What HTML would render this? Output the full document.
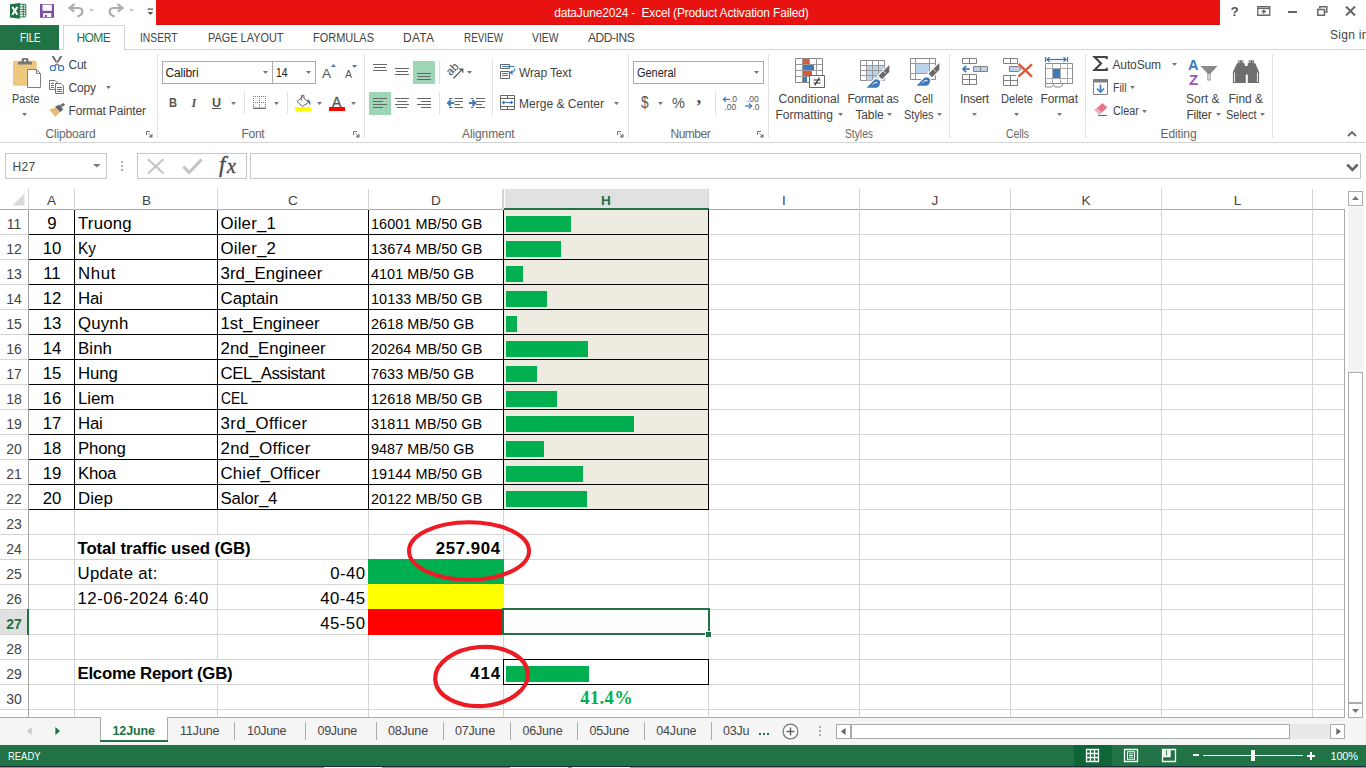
<!DOCTYPE html>
<html lang="en"><head><meta charset="utf-8"><title>dataJune2024 - Excel</title>
<style>
html,body{margin:0;padding:0}
body{width:1366px;height:768px;position:relative;overflow:hidden;background:#fff;font-family:'Liberation Sans',sans-serif}
.r{position:absolute;display:block}
.t{position:absolute;white-space:nowrap;line-height:1}
</style></head>
<body>
<div class="r" style="left:156px;top:0px;width:1064px;height:25px;background:#E81210;"></div>
<div class="r" style="left:156px;top:24px;width:1064px;height:1px;background:#D40F0D;"></div>
<span id="t0" class="t" style="top:7.01px;font-size:12px;color:#fff;font-family:'Liberation Sans',sans-serif;letter-spacing:-0.174px;left:554.2px;white-space:pre;">dataJune2024 -  Excel (Product Activation Failed)</span>
<svg class="r" style="left:10px;top:3px" width="17" height="16" viewBox="0 0 17 16"><rect x="9" y="1.3" width="6.8" height="12.6" rx="0.8" fill="#fff" stroke="#217346" stroke-width="1"/>
<path d="M10 3.9H15.4M10 6.3H15.4M10 8.7H15.4M10 11.1H15.4" stroke="#217346" stroke-width="0.9"/><path d="M13.3 1.6V13.6" stroke="#217346" stroke-width="0.9"/>
<path d="M0 1.3L9.9 0V15.8L0 14.4Z" fill="#217346"/>
<path d="M2.3 3.9L7.4 11.7M7.4 3.9L2.3 11.7" stroke="#fff" stroke-width="2"/></svg>
<svg class="r" style="left:40px;top:4px" width="14" height="14" viewBox="0 0 14 14"><path d="M0 0H14V13.8H0Z" fill="#7F4FA3"/><path d="M2.5 0.7H11.8V6.8H2.5Z" fill="#fff"/><path d="M3 9.2H11.3V13H3Z" fill="#fff"/><path d="M4.8 10.9H6.9V13H4.8Z" fill="#7F4FA3"/></svg>
<svg class="r" style="left:68px;top:3px" width="17" height="15" viewBox="0 0 17 15"><path d="M1.2 5H10.4C15.6 5 16.2 11.6 9.3 13.5" fill="none" stroke="#ADADAD" stroke-width="2.2"/><path d="M6.4 1.2L1.6 5L6.2 8.7" fill="none" stroke="#ADADAD" stroke-width="2.3"/></svg>
<svg class="r" style="left:89px;top:9px" width="5" height="3" viewBox="0 0 5 3"><path d="M0 0H5L2.5 3Z" fill="#C4C4C4"/></svg>
<svg class="r" style="left:108px;top:3px" width="17" height="15" viewBox="0 0 17 15"><path d="M14.8 5H5.6C0.4 5 -0.2 11.6 6.7 13.5" fill="none" stroke="#ADADAD" stroke-width="2.2"/><path d="M9.6 1.2L14.4 5L9.8 8.7" fill="none" stroke="#ADADAD" stroke-width="2.3"/></svg>
<svg class="r" style="left:129px;top:9px" width="5" height="3" viewBox="0 0 5 3"><path d="M0 0H5L2.5 3Z" fill="#C4C4C4"/></svg>
<svg class="r" style="left:147px;top:8px" width="7" height="8" viewBox="0 0 7 8"><path d="M0.8 1.1H6.1" stroke="#555" stroke-width="1.3"/><path d="M0.6 4H6.3L3.45 7Z" fill="#555"/></svg>
<span id="t1" class="t" style="top:5.01px;font-size:13.5px;color:#555;font-family:'Liberation Sans',sans-serif;font-weight:700;left:1230.5px;">?</span>
<svg class="r" style="left:1257px;top:6px" width="14" height="10" viewBox="0 0 14 10"><path d="M0.75 0.75H12.75V9.25H0.75Z" fill="none" stroke="#666" stroke-width="1.3"/><path d="M0.75 2.5H12.75" stroke="#666" stroke-width="1.2"/><path d="M6.75 8V4.4M4.6 6.4L6.75 4.2L8.9 6.4" fill="none" stroke="#666" stroke-width="1.2"/></svg>
<div class="r" style="left:1288px;top:11px;width:9px;height:2px;background:#666;"></div>
<svg class="r" style="left:1317px;top:6px" width="11" height="10" viewBox="0 0 11 10"><path d="M2.8 2.4V0.8H9.8V6H8" fill="none" stroke="#666" stroke-width="1.5"/><path d="M0.8 3.6H7.4V9.2H0.8Z" fill="none" stroke="#666" stroke-width="1.5"/></svg>
<svg class="r" style="left:1345px;top:6px" width="11" height="10" viewBox="0 0 11 10"><path d="M1 0.6L10 9.4M10 0.6L1 9.4" stroke="#666" stroke-width="2.1"/></svg>
<div class="r" style="left:0px;top:25px;width:59px;height:25px;background:#217346;"></div>
<span id="t2" class="t" style="top:32.01px;font-size:12px;color:#fff;font-family:'Liberation Sans',sans-serif;transform:scaleX(0.8089);transform-origin:0 50%;left:19.5px;">FILE</span>
<div class="r" style="left:63px;top:25px;width:62px;height:25px;background:#fff;border:1px solid #D4D4D4;border-bottom:none;box-sizing:border-box;"></div>
<div class="r" style="left:59px;top:49px;width:4px;height:1px;background:#D4D4D4;"></div>
<div class="r" style="left:125px;top:49px;width:1241px;height:1px;background:#D4D4D4;"></div>
<span id="t3" class="t" style="top:32.01px;font-size:12px;color:#217346;font-family:'Liberation Sans',sans-serif;letter-spacing:-0.572px;left:76.5px;">HOME</span>
<span id="t4" class="t" style="top:32.01px;font-size:12px;color:#444;font-family:'Liberation Sans',sans-serif;transform:scaleX(0.8562);transform-origin:0 50%;left:139.5px;">INSERT</span>
<span id="t5" class="t" style="top:32.01px;font-size:12px;color:#444;font-family:'Liberation Sans',sans-serif;transform:scaleX(0.9105);transform-origin:0 50%;left:207.5px;">PAGE LAYOUT</span>
<span id="t6" class="t" style="top:32.01px;font-size:12px;color:#444;font-family:'Liberation Sans',sans-serif;transform:scaleX(0.9147);transform-origin:0 50%;left:313px;">FORMULAS</span>
<span id="t7" class="t" style="top:32.01px;font-size:12px;color:#444;font-family:'Liberation Sans',sans-serif;letter-spacing:0.219px;left:403px;">DATA</span>
<span id="t8" class="t" style="top:32.01px;font-size:12px;color:#444;font-family:'Liberation Sans',sans-serif;transform:scaleX(0.8238);transform-origin:0 50%;left:463.5px;">REVIEW</span>
<span id="t9" class="t" style="top:32.01px;font-size:12px;color:#444;font-family:'Liberation Sans',sans-serif;transform:scaleX(0.8640);transform-origin:0 50%;left:532px;">VIEW</span>
<span id="t10" class="t" style="top:32.01px;font-size:12px;color:#444;font-family:'Liberation Sans',sans-serif;letter-spacing:-0.438px;left:588px;">ADD-INS</span>
<span id="t11" class="t" style="top:29.01px;font-size:12px;color:#444;font-family:'Liberation Sans',sans-serif;letter-spacing:0.278px;left:1330px;">Sign in</span>
<div class="r" style="left:0px;top:142px;width:1366px;height:1px;background:#D4D4D4;"></div>
<div class="r" style="left:157px;top:54px;width:1px;height:84px;background:#E1E1E1;"></div>
<div class="r" style="left:364px;top:54px;width:1px;height:84px;background:#E1E1E1;"></div>
<div class="r" style="left:628px;top:54px;width:1px;height:84px;background:#E1E1E1;"></div>
<div class="r" style="left:768px;top:54px;width:1px;height:84px;background:#E1E1E1;"></div>
<div class="r" style="left:949px;top:54px;width:1px;height:84px;background:#E1E1E1;"></div>
<div class="r" style="left:1085px;top:54px;width:1px;height:84px;background:#E1E1E1;"></div>
<div class="r" style="left:1272px;top:54px;width:1px;height:84px;background:#E1E1E1;"></div>
<span id="t12" class="t" style="top:128.01px;font-size:12px;color:#666;font-family:'Liberation Sans',sans-serif;letter-spacing:-0.160px;left:45.5px;">Clipboard</span>
<span id="t13" class="t" style="top:128.01px;font-size:12px;color:#666;font-family:'Liberation Sans',sans-serif;letter-spacing:-0.291px;left:241.5px;">Font</span>
<span id="t14" class="t" style="top:128.01px;font-size:12px;color:#666;font-family:'Liberation Sans',sans-serif;letter-spacing:-0.102px;left:462px;">Alignment</span>
<span id="t15" class="t" style="top:128.01px;font-size:12px;color:#666;font-family:'Liberation Sans',sans-serif;letter-spacing:-0.488px;left:670.5px;">Number</span>
<span id="t16" class="t" style="top:128.01px;font-size:12px;color:#666;font-family:'Liberation Sans',sans-serif;transform:scaleX(0.8566);transform-origin:0 50%;left:844.5px;">Styles</span>
<span id="t17" class="t" style="top:128.01px;font-size:12px;color:#666;font-family:'Liberation Sans',sans-serif;transform:scaleX(0.8623);transform-origin:0 50%;left:1005.5px;">Cells</span>
<span id="t18" class="t" style="top:128.01px;font-size:12px;color:#666;font-family:'Liberation Sans',sans-serif;letter-spacing:-0.107px;left:1160.5px;">Editing</span>
<svg class="r" style="left:146px;top:131px" width="7" height="7" viewBox="0 0 7 7"><path d="M0.5 4V0.5H4" fill="none" stroke="#777"/><path d="M6.5 2.5V6.5H2.5Z" fill="#777"/><path d="M2.5 2.5L6 6" stroke="#777"/></svg>
<svg class="r" style="left:353px;top:131px" width="7" height="7" viewBox="0 0 7 7"><path d="M0.5 4V0.5H4" fill="none" stroke="#777"/><path d="M6.5 2.5V6.5H2.5Z" fill="#777"/><path d="M2.5 2.5L6 6" stroke="#777"/></svg>
<svg class="r" style="left:617px;top:131px" width="7" height="7" viewBox="0 0 7 7"><path d="M0.5 4V0.5H4" fill="none" stroke="#777"/><path d="M6.5 2.5V6.5H2.5Z" fill="#777"/><path d="M2.5 2.5L6 6" stroke="#777"/></svg>
<svg class="r" style="left:757px;top:131px" width="7" height="7" viewBox="0 0 7 7"><path d="M0.5 4V0.5H4" fill="none" stroke="#777"/><path d="M6.5 2.5V6.5H2.5Z" fill="#777"/><path d="M2.5 2.5L6 6" stroke="#777"/></svg>
<svg class="r" style="left:1347px;top:130px" width="10" height="7" viewBox="0 0 10 7"><path d="M1 6L5 2L9 6" fill="none" stroke="#666" stroke-width="1.8"/></svg>
<svg class="r" style="left:12px;top:57px" width="30" height="32" viewBox="0 0 30 32"><rect x="1" y="3.8" width="23.8" height="25" rx="1.6" fill="#EDC87E"/>
<path d="M6 7.6V5.6Q6 4.4 7.2 4.4H18.8Q20 4.4 20 5.6V7.6Z" fill="#777"/><path d="M9.6 5V2.4Q9.6 1 11 1H15Q16.4 1 16.4 2.4V5Z" fill="#777"/><path d="M12 2.8H14V4.6H12Z" fill="#fff"/>
<path d="M15.5 12.5H24.5L28.5 16.5V30.5H15.5Z" fill="#fff" stroke="#808080"/><path d="M24.5 12.5V16.5H28.5" fill="none" stroke="#808080"/></svg>
<span id="t19" class="t" style="top:93.01px;font-size:12px;color:#444;font-family:'Liberation Sans',sans-serif;transform:scaleX(0.8961);transform-origin:0 50%;left:11.5px;">Paste</span>
<svg class="r" style="left:22px;top:113px" width="5" height="3" viewBox="0 0 5 3"><path d="M0 0H5L2.5 3Z" fill="#777"/></svg>
<svg class="r" style="left:49px;top:55px" width="16" height="16" viewBox="0 0 16 16"><path d="M2.6 1.2L4.8 1L10.6 11L9.4 11.6ZM13.4 1.2L11.2 1L5.4 11L6.6 11.6Z" fill="#666"/>
<circle cx="3.9" cy="13.2" r="2.6" fill="#fff" stroke="#3E79B9" stroke-width="1.2"/><circle cx="12.1" cy="13.2" r="2.6" fill="#fff" stroke="#3E79B9" stroke-width="1.2"/></svg>
<span id="t20" class="t" style="top:59.01px;font-size:12px;color:#444;font-family:'Liberation Sans',sans-serif;letter-spacing:-0.274px;left:68.5px;">Cut</span>
<svg class="r" style="left:49px;top:79px" width="16" height="15" viewBox="0 0 16 15"><path d="M0.5 1.5H6L8.5 4V10.5H0.5Z" fill="#fff" stroke="#777"/><path d="M2 4.5H5M2 6.5H5M2 8.5H5" stroke="#3E79B9"/>
<path d="M6.5 4.5H12L14.5 7V14.5H6.5Z" fill="#fff" stroke="#777"/><path d="M8 8.5H13M8 10.5H13M8 12.5H13" stroke="#3E79B9"/></svg>
<span id="t21" class="t" style="top:82.01px;font-size:12px;color:#444;font-family:'Liberation Sans',sans-serif;letter-spacing:-0.150px;left:68.5px;">Copy</span>
<svg class="r" style="left:106px;top:86px" width="5" height="3" viewBox="0 0 5 3"><path d="M0 0H5L2.5 3Z" fill="#777"/></svg>
<svg class="r" style="left:49px;top:102px" width="17" height="16" viewBox="0 0 17 16"><path d="M0.3 7.6L6.6 5.4L10.6 10.6L6.3 14.8Z" fill="#E8B96A"/><path d="M6 4.7L10.6 2.4L14.3 7.4L11 10.2Z" fill="#666"/><path d="M11 2.9L14.7 1L15.9 2.9L12.9 5.1Z" fill="#666"/></svg>
<span id="t22" class="t" style="top:105.01px;font-size:12px;color:#444;font-family:'Liberation Sans',sans-serif;letter-spacing:-0.138px;left:68.5px;">Format Painter</span>
<div class="r" style="left:162px;top:61px;width:111px;height:23px;background:#fff;border:1px solid #ABABAB;box-sizing:border-box;"></div>
<div class="r" style="left:272px;top:61px;width:44px;height:23px;background:#fff;border:1px solid #ABABAB;box-sizing:border-box;"></div>
<span id="t23" class="t" style="top:67.01px;font-size:12px;color:#222;font-family:'Liberation Sans',sans-serif;letter-spacing:-0.156px;left:165.5px;">Calibri</span>
<span id="t24" class="t" style="top:67.01px;font-size:12px;color:#222;font-family:'Liberation Sans',sans-serif;transform:scaleX(0.8608);transform-origin:0 50%;left:276px;">14</span>
<svg class="r" style="left:263px;top:71px" width="5" height="3" viewBox="0 0 5 3"><path d="M0 0H5L2.5 3Z" fill="#777"/></svg>
<svg class="r" style="left:305.5px;top:71px" width="5" height="3" viewBox="0 0 5 3"><path d="M0 0H5L2.5 3Z" fill="#777"/></svg>
<span id="t25" class="t" style="top:67.01px;font-size:13.5px;color:#555;font-family:'Liberation Sans',sans-serif;letter-spacing:0.984px;left:322px;">A</span>
<svg class="r" style="left:331px;top:64px" width="5" height="3" viewBox="0 0 5 3"><path d="M0 3H5L2.5 0Z" fill="#3E79B9"/></svg>
<span id="t26" class="t" style="top:69.00px;font-size:10.5px;color:#555;font-family:'Liberation Sans',sans-serif;letter-spacing:0.484px;left:345px;">A</span>
<svg class="r" style="left:352px;top:64.5px" width="5" height="3" viewBox="0 0 5 3"><path d="M0 0H5L2.5 3Z" fill="#3E79B9"/></svg>
<span id="t27" class="t" style="top:97.01px;font-size:12.5px;color:#555;font-family:'Liberation Sans',sans-serif;font-weight:700;transform:scaleX(0.8858);transform-origin:0 50%;left:168.5px;">B</span>
<span id="t28" class="t" style="top:97.01px;font-size:12.5px;color:#555;font-family:'Liberation Serif',serif;font-weight:700;font-style:italic;left:191.5px;">I</span>
<span id="t29" class="t" style="top:97.01px;font-size:12.5px;color:#555;font-family:'Liberation Sans',sans-serif;font-weight:700;letter-spacing:-0.031px;left:212px;">U</span>
<div class="r" style="left:212px;top:108px;width:9px;height:1px;background:#555;"></div>
<svg class="r" style="left:231px;top:102px" width="5" height="3" viewBox="0 0 5 3"><path d="M0 0H5L2.5 3Z" fill="#777"/></svg>
<div class="r" style="left:244px;top:92px;width:1px;height:22px;background:#E1E1E1;"></div>
<div class="r" style="left:287px;top:92px;width:1px;height:22px;background:#E1E1E1;"></div>
<svg class="r" style="left:253px;top:96px" width="13" height="13" viewBox="0 0 13 13"><path d="M0 0.5H13M0 6.5H13M0.5 0V11.5M6.5 0V11.5M12.5 0V11.5" stroke="#7A7A7A" stroke-dasharray="1 1" fill="none" shape-rendering="crispEdges"/><path d="M0 12.3H13" stroke="#666" stroke-width="1.3"/></svg>
<svg class="r" style="left:273.5px;top:102px" width="5" height="3" viewBox="0 0 5 3"><path d="M0 0H5L2.5 3Z" fill="#777"/></svg>
<svg class="r" style="left:294px;top:93px" width="18" height="19" viewBox="0 0 18 19"><path d="M1 14H17V18H1Z" fill="#FFFF00"/><path d="M8.6 3.6L14.4 9.6L8.6 13.4L3 8.6Z" fill="#fff" stroke="#666" stroke-width="1"/><path d="M7.4 7.5V2.4H10V5" fill="none" stroke="#666" stroke-width="1"/><path d="M13.6 6.2C17 7.4 17 11 15.8 12.8C15.4 10.6 14.8 9.6 13.2 8.6Z" fill="#3E79B9"/></svg>
<svg class="r" style="left:316.5px;top:102px" width="5" height="3" viewBox="0 0 5 3"><path d="M0 0H5L2.5 3Z" fill="#777"/></svg>
<span id="t30" class="t" style="top:95.01px;font-size:14px;color:#555;font-family:'Liberation Sans',sans-serif;letter-spacing:1.656px;left:332px;-webkit-text-stroke:0.3px #555;">A</span>
<div class="r" style="left:329px;top:107px;width:16px;height:4px;background:#F00;"></div>
<svg class="r" style="left:350.5px;top:102px" width="5" height="3" viewBox="0 0 5 3"><path d="M0 0H5L2.5 3Z" fill="#777"/></svg>
<div class="r" style="left:373px;top:64px;width:14px;height:1px;background:#666;"></div>
<div class="r" style="left:374px;top:67px;width:12px;height:1px;background:#666;"></div>
<div class="r" style="left:373px;top:70px;width:14px;height:1px;background:#666;"></div>
<div class="r" style="left:395px;top:68px;width:14px;height:1px;background:#666;"></div>
<div class="r" style="left:396px;top:71px;width:12px;height:1px;background:#666;"></div>
<div class="r" style="left:395px;top:74px;width:14px;height:1px;background:#666;"></div>
<div class="r" style="left:413px;top:61px;width:22px;height:23px;background:#9FD5B7;"></div>
<div class="r" style="left:417px;top:73px;width:14px;height:1px;background:#666;"></div>
<div class="r" style="left:418px;top:76px;width:12px;height:1px;background:#666;"></div>
<div class="r" style="left:417px;top:79px;width:14px;height:1px;background:#666;"></div>
<div class="r" style="left:439px;top:61px;width:1px;height:23px;background:#E1E1E1;"></div>
<div class="r" style="left:369px;top:92px;width:22px;height:23px;background:#9FD5B7;"></div>
<div class="r" style="left:373px;top:98px;width:14px;height:1px;background:#666;"></div>
<div class="r" style="left:373px;top:101px;width:10px;height:1px;background:#666;"></div>
<div class="r" style="left:373px;top:104px;width:14px;height:1px;background:#666;"></div>
<div class="r" style="left:373px;top:107px;width:10px;height:1px;background:#666;"></div>
<div class="r" style="left:395px;top:98px;width:14px;height:1px;background:#666;"></div>
<div class="r" style="left:397px;top:101px;width:10px;height:1px;background:#666;"></div>
<div class="r" style="left:395px;top:104px;width:14px;height:1px;background:#666;"></div>
<div class="r" style="left:397px;top:107px;width:10px;height:1px;background:#666;"></div>
<div class="r" style="left:417px;top:98px;width:14px;height:1px;background:#666;"></div>
<div class="r" style="left:421px;top:101px;width:10px;height:1px;background:#666;"></div>
<div class="r" style="left:417px;top:104px;width:14px;height:1px;background:#666;"></div>
<div class="r" style="left:421px;top:107px;width:10px;height:1px;background:#666;"></div>
<div class="r" style="left:439px;top:92px;width:1px;height:23px;background:#E1E1E1;"></div>
<svg class="r" style="left:446px;top:63px" width="18" height="17" viewBox="0 0 18 17"><path d="M7.4 15.4L16.4 6.4" stroke="#444" stroke-width="1.1"/><path d="M13.2 6.1H16.8V9.7" fill="none" stroke="#444" stroke-width="1.1"/>
<text x="0" y="0" font-family="Liberation Sans,sans-serif" font-size="11.5" fill="#444" transform="translate(4.6,13.2) rotate(-45)">ab</text></svg>
<svg class="r" style="left:467px;top:71px" width="5" height="3" viewBox="0 0 5 3"><path d="M0 0H5L2.5 3Z" fill="#777"/></svg>
<div class="r" style="left:492px;top:60px;width:1px;height:55px;background:#E1E1E1;"></div>
<svg class="r" style="left:447px;top:97px" width="17" height="12" viewBox="0 0 17 12"><path d="M2 1.5H5.5M7.5 1.5H16M7.5 4.5H16M7.5 7.5H13M2 10.5H5.5M7.5 10.5H16" stroke="#666"/><path d="M0.8 6H7.2" stroke="#3E79B9" stroke-width="1.9"/><path d="M3.8 3L0.8 6L3.8 9" fill="none" stroke="#3E79B9" stroke-width="1.9"/></svg>
<svg class="r" style="left:469px;top:97px" width="17" height="12" viewBox="0 0 17 12"><path d="M2 1.5H4.5M7 1.5H16M7 4.5H16M7 7.5H13M2 10.5H4.5M7 10.5H16" stroke="#666"/><path d="M0 6H6.4" stroke="#3E79B9" stroke-width="1.9"/><path d="M3.4 3L6.4 6L3.4 9" fill="none" stroke="#3E79B9" stroke-width="1.9"/></svg>
<svg class="r" style="left:499px;top:63px" width="18" height="17" viewBox="0 0 18 17"><path d="M1.5 1.5H10.5V5.5H1.5Z" fill="#fff" stroke="#666"/><path d="M1.5 8.5H10.5V15.5H1.5Z" fill="#fff" stroke="#666"/><path d="M3 3.5H15.5" stroke="#3E79B9" stroke-width="1.1"/><path d="M3 10.5H9M3 12.5H9" stroke="#3E79B9" stroke-width="1.1"/>
<path d="M15.6 5.4C16.2 8.6 14.4 9.6 11.6 9.6" fill="none" stroke="#3E79B9" stroke-width="1.1"/><path d="M13.6 7.5L11.4 9.6L13.6 11.7" fill="none" stroke="#3E79B9" stroke-width="1.1"/></svg>
<span id="t31" class="t" style="top:67.01px;font-size:12px;color:#444;font-family:'Liberation Sans',sans-serif;letter-spacing:-0.127px;left:519px;">Wrap Text</span>
<svg class="r" style="left:499px;top:94px" width="17" height="17" viewBox="0 0 17 17"><path d="M1.5 1.5H15.5V15.5H1.5Z" fill="#fff" stroke="#666"/><path d="M1.5 4.5H15.5M1.5 12.5H15.5M8.5 1.5V4.5M8.5 12.5V15.5" stroke="#666"/>
<path d="M3.6 8.5H13.4" stroke="#3E79B9" stroke-width="1.1"/><path d="M5.4 6.8L3.4 8.5L5.4 10.2M11.6 6.8L13.6 8.5L11.6 10.2" fill="none" stroke="#3E79B9" stroke-width="1.1"/></svg>
<span id="t32" class="t" style="top:98.01px;font-size:12px;color:#444;font-family:'Liberation Sans',sans-serif;letter-spacing:0.022px;left:519px;">Merge &amp; Center</span>
<svg class="r" style="left:613.5px;top:102px" width="5" height="3" viewBox="0 0 5 3"><path d="M0 0H5L2.5 3Z" fill="#777"/></svg>
<div class="r" style="left:633px;top:61px;width:131px;height:23px;background:#fff;border:1px solid #ABABAB;box-sizing:border-box;"></div>
<span id="t33" class="t" style="top:67.01px;font-size:12px;color:#222;font-family:'Liberation Sans',sans-serif;transform:scaleX(0.9133);transform-origin:0 50%;left:636.5px;">General</span>
<svg class="r" style="left:753.5px;top:71px" width="5" height="3" viewBox="0 0 5 3"><path d="M0 0H5L2.5 3Z" fill="#777"/></svg>
<span id="t34" class="t" style="top:93.50px;font-size:17px;color:#555;font-family:'Liberation Sans',sans-serif;transform:scaleX(0.8026);transform-origin:0 50%;left:640.8px;">$</span>
<svg class="r" style="left:657.5px;top:102px" width="5" height="3" viewBox="0 0 5 3"><path d="M0 0H5L2.5 3Z" fill="#777"/></svg>
<span id="t35" class="t" style="top:96.01px;font-size:14.5px;color:#555;font-family:'Liberation Sans',sans-serif;letter-spacing:0.094px;left:672px;">%</span>
<span id="t36" class="t" style="top:87.01px;font-size:19px;color:#555;font-family:'Liberation Serif',serif;font-weight:700;left:696.5px;">,</span>
<div class="r" style="left:715px;top:92px;width:1px;height:23px;background:#E1E1E1;"></div>
<svg class="r" style="left:722px;top:95px" width="16" height="15" viewBox="0 0 16 15"><path d="M1.4 4.4H7.8" stroke="#3E79B9" stroke-width="1.3"/><path d="M4 1.9L1.4 4.4L4 6.9" fill="none" stroke="#3E79B9" stroke-width="1.3"/>
<text x="8" y="6.5" font-family="Liberation Sans,sans-serif" font-size="8.5" fill="#555">.0</text><text x="2.5" y="14.5" font-family="Liberation Sans,sans-serif" font-size="8.5" fill="#555">.00</text></svg>
<svg class="r" style="left:744px;top:95px" width="16" height="15" viewBox="0 0 16 15"><text x="3" y="6.5" font-family="Liberation Sans,sans-serif" font-size="8.5" fill="#555">.00</text><text x="8.5" y="14.5" font-family="Liberation Sans,sans-serif" font-size="8.5" fill="#555">.0</text>
<path d="M1.2 11H7.6" stroke="#3E79B9" stroke-width="1.3"/><path d="M5 8.5L7.6 11L5 13.5" fill="none" stroke="#3E79B9" stroke-width="1.3"/></svg>
<svg class="r" style="left:795px;top:58px" width="31" height="30" viewBox="0 0 31 30"><path d="M0.5 0.5H27.5V24.5H0.5Z" fill="#fff" stroke="#8A8A8A"/><path d="M0.5 6.5H27.5M0.5 12.5H27.5M0.5 18.5H27.5M7.5 0.5V24.5M14.5 0.5V24.5M21.5 0.5V24.5" stroke="#9A9A9A"/>
<path d="M8 1H14V6H8Z" fill="#D6593B"/><path d="M8 7H19V12H8Z" fill="#3E79B9"/><path d="M8 13H17V18H8Z" fill="#D6593B"/><path d="M8 19H12V24H8Z" fill="#3E79B9"/>
<path d="M14.5 17.5H29.5V29.5H14.5Z" fill="#fff" stroke="#666"/><path d="M18.5 22H25.5M18.5 25H25.5M24.4 19.6L19.8 27.4" stroke="#333" stroke-width="1.1"/></svg>
<span id="t37" class="t" style="top:93.01px;font-size:12px;color:#444;font-family:'Liberation Sans',sans-serif;letter-spacing:0.091px;left:778.5px;">Conditional</span>
<span id="t38" class="t" style="top:109.01px;font-size:12px;color:#444;font-family:'Liberation Sans',sans-serif;letter-spacing:0.014px;left:775.5px;">Formatting</span>
<svg class="r" style="left:837.5px;top:113px" width="5" height="3" viewBox="0 0 5 3"><path d="M0 0H5L2.5 3Z" fill="#777"/></svg>
<svg class="r" style="left:860px;top:60px" width="31" height="28" viewBox="0 0 31 28"><path d="M0.5 0.5H24.5V20.5H0.5Z" fill="#fff" stroke="#8A8A8A"/><path d="M6.5 5.5H24.5V20.5H6.5Z" fill="#BDD3EB"/><path d="M0.5 5.5H24.5M0.5 10.5H24.5M0.5 15.5H24.5M6.5 0.5V20.5M12.5 0.5V20.5M18.5 0.5V20.5" stroke="#9A9A9A"/>
<path d="M29.4 5L29.4 11.8L22 19.2L18.5 15.7Z" fill="#6A6A6A" stroke="#fff" stroke-width="2.2" paint-order="stroke"/><path d="M17.6 16.2L21.8 20.4" stroke="#fff" stroke-width="1.3"/><path d="M23.2 10.8L26 13.8" stroke="#fff" stroke-width="0.8"/><path d="M6.6 27.7L15 19.2Q20.6 19.2 20.2 23Q19.8 26.6 17 27.7Z" fill="#3E79B9" stroke="#fff" stroke-width="2.2" paint-order="stroke"/><path d="M12.6 24.6Q14.6 21.6 17.6 22.8" fill="none" stroke="#fff" stroke-width="1"/></svg>
<span id="t39" class="t" style="top:93.01px;font-size:12px;color:#444;font-family:'Liberation Sans',sans-serif;letter-spacing:-0.356px;left:847.5px;">Format as</span>
<span id="t40" class="t" style="top:109.01px;font-size:12px;color:#444;font-family:'Liberation Sans',sans-serif;letter-spacing:-0.156px;left:855.5px;">Table</span>
<svg class="r" style="left:887px;top:113px" width="5" height="3" viewBox="0 0 5 3"><path d="M0 0H5L2.5 3Z" fill="#777"/></svg>
<svg class="r" style="left:910px;top:58px" width="31" height="29" viewBox="0 0 31 29"><path d="M0.5 0.5H25.5V21.5H0.5Z" fill="#fff" stroke="#8A8A8A"/><path d="M0.5 5.5H25.5M0.5 15.5H25.5M5.5 0.5V21.5M19.5 0.5V21.5" stroke="#9A9A9A"/><path d="M6 6H19V15H6Z" fill="#BDD3EB"/>
<path d="M29.4 5L29.4 11.8L22 19.2L18.5 15.7Z" fill="#6A6A6A" stroke="#fff" stroke-width="2.2" paint-order="stroke"/><path d="M17.6 16.2L21.8 20.4" stroke="#fff" stroke-width="1.3"/><path d="M23.2 10.8L26 13.8" stroke="#fff" stroke-width="0.8"/><path d="M6.6 27.7L15 19.2Q20.6 19.2 20.2 23Q19.8 26.6 17 27.7Z" fill="#3E79B9" stroke="#fff" stroke-width="2.2" paint-order="stroke"/><path d="M12.6 24.6Q14.6 21.6 17.6 22.8" fill="none" stroke="#fff" stroke-width="1"/></svg>
<span id="t41" class="t" style="top:93.01px;font-size:12px;color:#444;font-family:'Liberation Sans',sans-serif;transform:scaleX(0.9191);transform-origin:0 50%;left:913.5px;">Cell</span>
<span id="t42" class="t" style="top:109.01px;font-size:12px;color:#444;font-family:'Liberation Sans',sans-serif;transform:scaleX(0.9025);transform-origin:0 50%;left:904px;">Styles</span>
<svg class="r" style="left:937px;top:113px" width="5" height="3" viewBox="0 0 5 3"><path d="M0 0H5L2.5 3Z" fill="#777"/></svg>
<svg class="r" style="left:961px;top:57px" width="28" height="29" viewBox="0 0 28 29"><path d="M1.5 1.5H15.5V6.5H1.5Z" fill="#fff" stroke="#808080"/><path d="M8.5 1.5V6.5" stroke="#808080"/>
<path d="M12.5 9.5H26.5V14.5H12.5Z" fill="#BDD3EB" stroke="#808080"/><path d="M19.5 9.5V14.5" stroke="#808080"/>
<path d="M2.2 12H8.8" stroke="#3E79B9" stroke-width="1.7"/><path d="M5.2 8.8L2 12L5.2 15.2" fill="none" stroke="#3E79B9" stroke-width="1.7"/>
<path d="M1.5 17.5H15.5V27.5H1.5Z" fill="#fff" stroke="#808080"/><path d="M8.5 17.5V27.5M1.5 22.5H15.5" stroke="#808080"/></svg>
<span id="t43" class="t" style="top:93.01px;font-size:12px;color:#444;font-family:'Liberation Sans',sans-serif;letter-spacing:-0.185px;left:960px;">Insert</span>
<svg class="r" style="left:972px;top:113px" width="5" height="3" viewBox="0 0 5 3"><path d="M0 0H5L2.5 3Z" fill="#777"/></svg>
<svg class="r" style="left:1002px;top:57px" width="31" height="29" viewBox="0 0 31 29"><path d="M1.5 1.5H15.5V6.5H1.5Z" fill="#fff" stroke="#808080"/><path d="M8.5 1.5V6.5" stroke="#808080"/>
<path d="M7.5 9.5H16.5L19.5 12L16.5 14.5H7.5Z" fill="#BDD3EB" stroke="#808080"/>
<path d="M1.5 18.5H15.5V28.5H1.5Z" fill="#fff" stroke="#808080"/><path d="M8.5 18.5V28.5M1.5 23.5H15.5" stroke="#808080"/><path d="M14 17H17V21H14Z" fill="#fff"/>
<path d="M16.6 6.8L30 19.6M30 7.4L16.4 19.6" stroke="#D6593B" stroke-width="2.4"/></svg>
<span id="t44" class="t" style="top:93.01px;font-size:12px;color:#444;font-family:'Liberation Sans',sans-serif;transform:scaleX(0.9225);transform-origin:0 50%;left:1000.5px;">Delete</span>
<svg class="r" style="left:1014px;top:113px" width="5" height="3" viewBox="0 0 5 3"><path d="M0 0H5L2.5 3Z" fill="#777"/></svg>
<svg class="r" style="left:1044px;top:56px" width="30" height="32" viewBox="0 0 30 32"><path d="M1.5 1V6M23.5 1V6" stroke="#3E79B9" stroke-width="1.2"/><path d="M3 3.5H22" stroke="#3E79B9" stroke-width="1.3"/><path d="M5.5 1.2L3 3.5L5.5 5.8M19.5 1.2L22 3.5L19.5 5.8" fill="none" stroke="#3E79B9" stroke-width="1.3"/>
<path d="M1.5 7.5H28.5V27.5H1.5Z" fill="#fff" stroke="#8A8A8A"/><path d="M1.5 12.5H28.5M1.5 22.5H28.5M8.5 7.5V27.5M16.5 7.5V27.5M23.5 7.5V27.5" stroke="#ABABAB"/>
<path d="M9 13H16V22H9Z" fill="#3E79B9"/><path d="M1.5 27.5V31H7.5L9.5 28.5L11 31H17L19.5 27.5" fill="none" stroke="#8A8A8A"/></svg>
<span id="t45" class="t" style="top:93.01px;font-size:12px;color:#444;font-family:'Liberation Sans',sans-serif;letter-spacing:-0.094px;left:1040.5px;">Format</span>
<svg class="r" style="left:1056.5px;top:113px" width="5" height="3" viewBox="0 0 5 3"><path d="M0 0H5L2.5 3Z" fill="#777"/></svg>
<svg class="r" style="left:1092px;top:55px" width="17" height="17" viewBox="0 0 17 17"><path d="M14.7 4.2V2H2.6L9 8.5L2.6 15H14.7V12.8" fill="none" stroke="#444" stroke-width="2.1" stroke-linejoin="miter"/></svg>
<span id="t46" class="t" style="top:59.01px;font-size:12px;color:#444;font-family:'Liberation Sans',sans-serif;letter-spacing:-0.133px;left:1112.5px;">AutoSum</span>
<svg class="r" style="left:1171.5px;top:63.3px" width="5" height="3" viewBox="0 0 5 3"><path d="M0 0H5L2.5 3Z" fill="#777"/></svg>
<svg class="r" style="left:1093px;top:79px" width="15" height="16" viewBox="0 0 15 16"><path d="M0.5 0.5H14.5V15.5H0.5Z" fill="#fff" stroke="#808080"/><path d="M0.5 0.5H14.5V3.5H0.5Z" fill="#808080"/><path d="M7.5 5.5V13" stroke="#3E79B9" stroke-width="1.6"/><path d="M4 9.5L7.5 13L11 9.5" fill="none" stroke="#3E79B9" stroke-width="1.6"/></svg>
<span id="t47" class="t" style="top:82.01px;font-size:12px;color:#444;font-family:'Liberation Sans',sans-serif;transform:scaleX(0.8807);transform-origin:0 50%;left:1112.5px;">Fill</span>
<svg class="r" style="left:1130px;top:86px" width="5" height="3" viewBox="0 0 5 3"><path d="M0 0H5L2.5 3Z" fill="#777"/></svg>
<svg class="r" style="left:1093px;top:102px" width="16" height="15" viewBox="0 0 16 15"><path d="M9.4 1L14.4 5.4L6.6 12.6L1.6 8.2Z" fill="#E8768A"/><path d="M1.6 8.2L4 6L9 10.4L6.6 12.6Z" fill="#F3AEB9"/><path d="M5 13.5H14" stroke="#666"/></svg>
<span id="t48" class="t" style="top:105.01px;font-size:12px;color:#444;font-family:'Liberation Sans',sans-serif;transform:scaleX(0.9063);transform-origin:0 50%;left:1112.5px;">Clear</span>
<svg class="r" style="left:1142px;top:109.5px" width="5" height="3" viewBox="0 0 5 3"><path d="M0 0H5L2.5 3Z" fill="#777"/></svg>
<span id="t49" class="t" style="top:58.01px;font-size:14.5px;color:#3E79B9;font-family:'Liberation Sans',sans-serif;font-weight:700;letter-spacing:1.016px;left:1188px;">A</span>
<span id="t50" class="t" style="top:71.51px;font-size:15.2px;color:#9B57B5;font-family:'Liberation Sans',sans-serif;font-weight:700;letter-spacing:0.219px;left:1189px;">Z</span>
<svg class="r" style="left:1200px;top:65px" width="18" height="17" viewBox="0 0 18 17"><path d="M0.5 1H17.5L10.6 8.6V15.5H7.4V8.6Z" fill="#8A8A8A"/><path d="M8.4 9V14.5H9.6V9Z" fill="#fff"/></svg>
<span id="t51" class="t" style="top:93.01px;font-size:12px;color:#444;font-family:'Liberation Sans',sans-serif;letter-spacing:0.026px;left:1186px;">Sort &amp;</span>
<span id="t52" class="t" style="top:109.01px;font-size:12px;color:#444;font-family:'Liberation Sans',sans-serif;letter-spacing:-0.303px;left:1186.5px;">Filter</span>
<svg class="r" style="left:1215.5px;top:113px" width="5" height="3" viewBox="0 0 5 3"><path d="M0 0H5L2.5 3Z" fill="#777"/></svg>
<svg class="r" style="left:1232px;top:59px" width="28" height="25" viewBox="0 0 28 25"><path d="M6.2 1.2H11.4V4.2H12.6L13.8 12V24H0.9V13L5 4.2H6.2Z" fill="#6E6E6E"/><path d="M16.7 1.2H22V4.2H23.2L27.1 13V24H15.8V12L15.6 4.2H16.7Z" fill="#6E6E6E"/><path d="M12.5 7H16.5V15.5H12.5Z" fill="#6E6E6E"/>
<path d="M2.6 13.5V23M25.4 13.5V23" stroke="#fff" stroke-width="0.9"/><path d="M7.4 1.2V4M10.2 1.2V4M17.9 1.2V4M20.7 1.2V4" stroke="#fff" stroke-width="0.5"/></svg>
<span id="t53" class="t" style="top:93.01px;font-size:12px;color:#444;font-family:'Liberation Sans',sans-serif;letter-spacing:-0.034px;left:1228.5px;">Find &amp;</span>
<span id="t54" class="t" style="top:109.01px;font-size:12px;color:#444;font-family:'Liberation Sans',sans-serif;transform:scaleX(0.9143);transform-origin:0 50%;left:1226px;">Select</span>
<svg class="r" style="left:1260px;top:113px" width="5" height="3" viewBox="0 0 5 3"><path d="M0 0H5L2.5 3Z" fill="#777"/></svg>
<div class="r" style="left:5px;top:153px;width:102px;height:26px;background:#fff;border:1px solid #C6C6C6;box-sizing:border-box;"></div>
<span id="t55" class="t" style="top:161.01px;font-size:12px;color:#444;font-family:'Liberation Sans',sans-serif;letter-spacing:0.271px;left:12.5px;">H27</span>
<svg class="r" style="left:93px;top:163.5px" width="8" height="4" viewBox="0 0 8 4"><path d="M0 0H7.6L3.8 3.6Z" fill="#777"/></svg>
<div class="r" style="left:121px;top:161px;width:2px;height:2px;background:#B0B0B0;"></div>
<div class="r" style="left:121px;top:165px;width:2px;height:2px;background:#B0B0B0;"></div>
<div class="r" style="left:121px;top:169px;width:2px;height:2px;background:#B0B0B0;"></div>
<div class="r" style="left:137px;top:153px;width:110px;height:26px;background:#fff;border:1px solid #C6C6C6;box-sizing:border-box;"></div>
<svg class="r" style="left:147px;top:158px" width="18" height="17" viewBox="0 0 18 17"><path d="M1 1.2L16.5 15.5M16.5 1.2L1 15.5" stroke="#C4C4C4" stroke-width="2.1"/></svg>
<svg class="r" style="left:182px;top:158px" width="22" height="17" viewBox="0 0 22 17"><path d="M1.4 8.6L7.2 14.6L19.6 1.4" fill="none" stroke="#C4C4C4" stroke-width="3"/></svg>
<span id="t56" class="t" style="top:152.51px;font-size:23px;color:#4A4A4A;font-family:'Liberation Serif',serif;font-style:italic;left:219px;-webkit-text-stroke:0.35px #4A4A4A;">f</span>
<span id="t57" class="t" style="top:155.51px;font-size:20px;color:#4A4A4A;font-family:'Liberation Serif',serif;font-style:italic;left:227px;-webkit-text-stroke:0.35px #4A4A4A;">x</span>
<div class="r" style="left:250px;top:153px;width:1111px;height:26px;background:#fff;border:1px solid #C6C6C6;box-sizing:border-box;"></div>
<svg class="r" style="left:1346px;top:163px" width="13" height="10" viewBox="0 0 13 10"><path d="M1.2 1.5L6.4 6.8L11.6 1.5" fill="none" stroke="#666" stroke-width="2.6"/></svg>
<div class="r" style="left:0px;top:209px;width:1345px;height:1px;background:#ABABAB;"></div>
<div class="r" style="left:74px;top:189px;width:1px;height:21px;background:#D4D4D4;"></div>
<div class="r" style="left:217px;top:189px;width:1px;height:21px;background:#D4D4D4;"></div>
<div class="r" style="left:368px;top:189px;width:1px;height:21px;background:#D4D4D4;"></div>
<div class="r" style="left:503px;top:189px;width:1px;height:21px;background:#D4D4D4;"></div>
<div class="r" style="left:708px;top:189px;width:1px;height:21px;background:#D4D4D4;"></div>
<div class="r" style="left:859px;top:189px;width:1px;height:21px;background:#D4D4D4;"></div>
<div class="r" style="left:1010px;top:189px;width:1px;height:21px;background:#D4D4D4;"></div>
<div class="r" style="left:1161px;top:189px;width:1px;height:21px;background:#D4D4D4;"></div>
<div class="r" style="left:1312px;top:189px;width:1px;height:21px;background:#D4D4D4;"></div>
<div class="r" style="left:28px;top:189px;width:1px;height:21px;background:#D4D4D4;"></div>
<div class="r" style="left:505px;top:189px;width:203px;height:19px;background:#E1E1E1;"></div>
<div class="r" style="left:504px;top:208px;width:205px;height:2px;background:#217346;"></div>
<div class="r" style="left:502px;top:189px;width:1px;height:20px;background:#D4D4D4;"></div>
<svg class="r" style="left:12px;top:193px" width="13" height="13" viewBox="0 0 13 13"><path d="M12.5 0.5V12.5H0.5Z" fill="#D9D9D9"/></svg>
<span id="t58" class="t" style="top:194.00px;font-size:13.6px;color:#444;font-family:'Liberation Sans',sans-serif;left:-148.50px;width:400px;text-align:center;">A</span>
<span id="t59" class="t" style="top:194.00px;font-size:13.6px;color:#444;font-family:'Liberation Sans',sans-serif;left:-53.50px;width:400px;text-align:center;">B</span>
<span id="t60" class="t" style="top:194.00px;font-size:13.6px;color:#444;font-family:'Liberation Sans',sans-serif;left:93.00px;width:400px;text-align:center;">C</span>
<span id="t61" class="t" style="top:194.00px;font-size:13.6px;color:#444;font-family:'Liberation Sans',sans-serif;left:236.00px;width:400px;text-align:center;">D</span>
<span id="t62" class="t" style="top:194.00px;font-size:13.6px;color:#217346;font-family:'Liberation Sans',sans-serif;font-weight:700;left:406.00px;width:400px;text-align:center;">H</span>
<span id="t63" class="t" style="top:194.00px;font-size:13.6px;color:#444;font-family:'Liberation Sans',sans-serif;left:584.00px;width:400px;text-align:center;">I</span>
<span id="t64" class="t" style="top:194.00px;font-size:13.6px;color:#444;font-family:'Liberation Sans',sans-serif;left:735.00px;width:400px;text-align:center;">J</span>
<span id="t65" class="t" style="top:194.00px;font-size:13.6px;color:#444;font-family:'Liberation Sans',sans-serif;left:886.00px;width:400px;text-align:center;">K</span>
<span id="t66" class="t" style="top:194.00px;font-size:13.6px;color:#444;font-family:'Liberation Sans',sans-serif;left:1037.50px;width:400px;text-align:center;">L</span>
<div class="r" style="left:0px;top:234px;width:28px;height:1px;background:#D4D4D4;"></div>
<div class="r" style="left:29px;top:234px;width:1315px;height:1px;background:#D4D4D4;"></div>
<div class="r" style="left:0px;top:259px;width:28px;height:1px;background:#D4D4D4;"></div>
<div class="r" style="left:29px;top:259px;width:1315px;height:1px;background:#D4D4D4;"></div>
<div class="r" style="left:0px;top:284px;width:28px;height:1px;background:#D4D4D4;"></div>
<div class="r" style="left:29px;top:284px;width:1315px;height:1px;background:#D4D4D4;"></div>
<div class="r" style="left:0px;top:309px;width:28px;height:1px;background:#D4D4D4;"></div>
<div class="r" style="left:29px;top:309px;width:1315px;height:1px;background:#D4D4D4;"></div>
<div class="r" style="left:0px;top:334px;width:28px;height:1px;background:#D4D4D4;"></div>
<div class="r" style="left:29px;top:334px;width:1315px;height:1px;background:#D4D4D4;"></div>
<div class="r" style="left:0px;top:359px;width:28px;height:1px;background:#D4D4D4;"></div>
<div class="r" style="left:29px;top:359px;width:1315px;height:1px;background:#D4D4D4;"></div>
<div class="r" style="left:0px;top:384px;width:28px;height:1px;background:#D4D4D4;"></div>
<div class="r" style="left:29px;top:384px;width:1315px;height:1px;background:#D4D4D4;"></div>
<div class="r" style="left:0px;top:409px;width:28px;height:1px;background:#D4D4D4;"></div>
<div class="r" style="left:29px;top:409px;width:1315px;height:1px;background:#D4D4D4;"></div>
<div class="r" style="left:0px;top:434px;width:28px;height:1px;background:#D4D4D4;"></div>
<div class="r" style="left:29px;top:434px;width:1315px;height:1px;background:#D4D4D4;"></div>
<div class="r" style="left:0px;top:459px;width:28px;height:1px;background:#D4D4D4;"></div>
<div class="r" style="left:29px;top:459px;width:1315px;height:1px;background:#D4D4D4;"></div>
<div class="r" style="left:0px;top:484px;width:28px;height:1px;background:#D4D4D4;"></div>
<div class="r" style="left:29px;top:484px;width:1315px;height:1px;background:#D4D4D4;"></div>
<div class="r" style="left:0px;top:509px;width:28px;height:1px;background:#D4D4D4;"></div>
<div class="r" style="left:29px;top:509px;width:1315px;height:1px;background:#D4D4D4;"></div>
<div class="r" style="left:0px;top:534px;width:28px;height:1px;background:#D4D4D4;"></div>
<div class="r" style="left:29px;top:534px;width:1315px;height:1px;background:#D4D4D4;"></div>
<div class="r" style="left:0px;top:559px;width:28px;height:1px;background:#D4D4D4;"></div>
<div class="r" style="left:29px;top:559px;width:1315px;height:1px;background:#D4D4D4;"></div>
<div class="r" style="left:0px;top:584px;width:28px;height:1px;background:#D4D4D4;"></div>
<div class="r" style="left:29px;top:584px;width:1315px;height:1px;background:#D4D4D4;"></div>
<div class="r" style="left:0px;top:609px;width:28px;height:1px;background:#D4D4D4;"></div>
<div class="r" style="left:29px;top:609px;width:1315px;height:1px;background:#D4D4D4;"></div>
<div class="r" style="left:0px;top:634px;width:28px;height:1px;background:#D4D4D4;"></div>
<div class="r" style="left:29px;top:634px;width:1315px;height:1px;background:#D4D4D4;"></div>
<div class="r" style="left:0px;top:659px;width:28px;height:1px;background:#D4D4D4;"></div>
<div class="r" style="left:29px;top:659px;width:1315px;height:1px;background:#D4D4D4;"></div>
<div class="r" style="left:0px;top:684px;width:28px;height:1px;background:#D4D4D4;"></div>
<div class="r" style="left:29px;top:684px;width:1315px;height:1px;background:#D4D4D4;"></div>
<div class="r" style="left:0px;top:709px;width:28px;height:1px;background:#D4D4D4;"></div>
<div class="r" style="left:29px;top:709px;width:1315px;height:1px;background:#D4D4D4;"></div>
<div class="r" style="left:74px;top:210px;width:1px;height:507px;background:#D4D4D4;"></div>
<div class="r" style="left:217px;top:210px;width:1px;height:507px;background:#D4D4D4;"></div>
<div class="r" style="left:368px;top:210px;width:1px;height:507px;background:#D4D4D4;"></div>
<div class="r" style="left:503px;top:210px;width:1px;height:507px;background:#D4D4D4;"></div>
<div class="r" style="left:708px;top:210px;width:1px;height:507px;background:#D4D4D4;"></div>
<div class="r" style="left:859px;top:210px;width:1px;height:507px;background:#D4D4D4;"></div>
<div class="r" style="left:1010px;top:210px;width:1px;height:507px;background:#D4D4D4;"></div>
<div class="r" style="left:1161px;top:210px;width:1px;height:507px;background:#D4D4D4;"></div>
<div class="r" style="left:1312px;top:210px;width:1px;height:507px;background:#D4D4D4;"></div>
<div class="r" style="left:28px;top:210px;width:1px;height:507px;background:#A3A3A3;"></div>
<div class="r" style="left:1344px;top:209px;width:1px;height:509px;background:#ABABAB;"></div>
<div class="r" style="left:0px;top:717px;width:1345px;height:1px;background:#ABABAB;"></div>
<div class="r" style="left:0px;top:610px;width:27px;height:24px;background:#E1E1E1;"></div>
<div class="r" style="left:27px;top:609px;width:2px;height:26px;background:#217346;"></div>
<span id="t67" class="t" style="top:217.01px;font-size:14px;color:#444;font-family:'Liberation Sans',sans-serif;left:-186.00px;width:400px;text-align:center;">11</span>
<span id="t68" class="t" style="top:242.01px;font-size:14px;color:#444;font-family:'Liberation Sans',sans-serif;left:-186.00px;width:400px;text-align:center;">12</span>
<span id="t69" class="t" style="top:267.01px;font-size:14px;color:#444;font-family:'Liberation Sans',sans-serif;left:-186.00px;width:400px;text-align:center;">13</span>
<span id="t70" class="t" style="top:292.01px;font-size:14px;color:#444;font-family:'Liberation Sans',sans-serif;left:-186.00px;width:400px;text-align:center;">14</span>
<span id="t71" class="t" style="top:317.01px;font-size:14px;color:#444;font-family:'Liberation Sans',sans-serif;left:-186.00px;width:400px;text-align:center;">15</span>
<span id="t72" class="t" style="top:342.01px;font-size:14px;color:#444;font-family:'Liberation Sans',sans-serif;left:-186.00px;width:400px;text-align:center;">16</span>
<span id="t73" class="t" style="top:367.01px;font-size:14px;color:#444;font-family:'Liberation Sans',sans-serif;left:-186.00px;width:400px;text-align:center;">17</span>
<span id="t74" class="t" style="top:392.01px;font-size:14px;color:#444;font-family:'Liberation Sans',sans-serif;left:-186.00px;width:400px;text-align:center;">18</span>
<span id="t75" class="t" style="top:417.01px;font-size:14px;color:#444;font-family:'Liberation Sans',sans-serif;left:-186.00px;width:400px;text-align:center;">19</span>
<span id="t76" class="t" style="top:442.01px;font-size:14px;color:#444;font-family:'Liberation Sans',sans-serif;left:-186.00px;width:400px;text-align:center;">20</span>
<span id="t77" class="t" style="top:467.01px;font-size:14px;color:#444;font-family:'Liberation Sans',sans-serif;left:-186.00px;width:400px;text-align:center;">21</span>
<span id="t78" class="t" style="top:492.01px;font-size:14px;color:#444;font-family:'Liberation Sans',sans-serif;left:-186.00px;width:400px;text-align:center;">22</span>
<span id="t79" class="t" style="top:517.01px;font-size:14px;color:#444;font-family:'Liberation Sans',sans-serif;left:-186.00px;width:400px;text-align:center;">23</span>
<span id="t80" class="t" style="top:542.01px;font-size:14px;color:#444;font-family:'Liberation Sans',sans-serif;left:-186.00px;width:400px;text-align:center;">24</span>
<span id="t81" class="t" style="top:567.01px;font-size:14px;color:#444;font-family:'Liberation Sans',sans-serif;left:-186.00px;width:400px;text-align:center;">25</span>
<span id="t82" class="t" style="top:592.01px;font-size:14px;color:#444;font-family:'Liberation Sans',sans-serif;left:-186.00px;width:400px;text-align:center;">26</span>
<span id="t83" class="t" style="top:617.01px;font-size:14px;color:#217346;font-family:'Liberation Sans',sans-serif;font-weight:700;left:-186.00px;width:400px;text-align:center;">27</span>
<span id="t84" class="t" style="top:642.01px;font-size:14px;color:#444;font-family:'Liberation Sans',sans-serif;left:-186.00px;width:400px;text-align:center;">28</span>
<span id="t85" class="t" style="top:667.01px;font-size:14px;color:#444;font-family:'Liberation Sans',sans-serif;left:-186.00px;width:400px;text-align:center;">29</span>
<span id="t86" class="t" style="top:692.01px;font-size:14px;color:#444;font-family:'Liberation Sans',sans-serif;left:-186.00px;width:400px;text-align:center;">30</span>
<div class="r" style="left:504px;top:210px;width:204px;height:300px;background:#EEECE1;"></div>
<div class="r" style="left:29px;top:234px;width:680px;height:1px;background:#000;"></div>
<div class="r" style="left:29px;top:259px;width:680px;height:1px;background:#000;"></div>
<div class="r" style="left:29px;top:284px;width:680px;height:1px;background:#000;"></div>
<div class="r" style="left:29px;top:309px;width:680px;height:1px;background:#000;"></div>
<div class="r" style="left:29px;top:334px;width:680px;height:1px;background:#000;"></div>
<div class="r" style="left:29px;top:359px;width:680px;height:1px;background:#000;"></div>
<div class="r" style="left:29px;top:384px;width:680px;height:1px;background:#000;"></div>
<div class="r" style="left:29px;top:409px;width:680px;height:1px;background:#000;"></div>
<div class="r" style="left:29px;top:434px;width:680px;height:1px;background:#000;"></div>
<div class="r" style="left:29px;top:459px;width:680px;height:1px;background:#000;"></div>
<div class="r" style="left:29px;top:484px;width:680px;height:1px;background:#000;"></div>
<div class="r" style="left:29px;top:509px;width:680px;height:1px;background:#000;"></div>
<div class="r" style="left:74px;top:210px;width:1px;height:300px;background:#000;"></div>
<div class="r" style="left:217px;top:210px;width:1px;height:300px;background:#000;"></div>
<div class="r" style="left:368px;top:210px;width:1px;height:300px;background:#000;"></div>
<div class="r" style="left:503px;top:210px;width:1px;height:300px;background:#000;"></div>
<div class="r" style="left:708px;top:210px;width:1px;height:300px;background:#000;"></div>
<span id="t87" class="t" style="top:216.01px;font-size:16.8px;color:#000;font-family:'Liberation Sans',sans-serif;left:-148.00px;width:400px;text-align:center;">9</span>
<span id="t88" class="t" style="top:216.01px;font-size:16.8px;color:#000;font-family:'Liberation Sans',sans-serif;letter-spacing:0.219px;left:78px;">Truong</span>
<span id="t89" class="t" style="top:216.01px;font-size:16.8px;color:#000;font-family:'Liberation Sans',sans-serif;letter-spacing:0.198px;left:220.5px;">Oiler_1</span>
<span id="t90" class="t" style="top:217.01px;font-size:14.4px;color:#000;font-family:'Liberation Sans',sans-serif;letter-spacing:0.064px;left:371px;">16001 MB/50 GB</span>
<div class="r" style="left:506px;top:216px;width:65px;height:16px;background:#00B050;"></div>
<span id="t91" class="t" style="top:241.01px;font-size:16.8px;color:#000;font-family:'Liberation Sans',sans-serif;left:-148.00px;width:400px;text-align:center;">10</span>
<span id="t92" class="t" style="top:241.01px;font-size:16.8px;color:#000;font-family:'Liberation Sans',sans-serif;transform:scaleX(0.9211);transform-origin:0 50%;left:78px;">Ky</span>
<span id="t93" class="t" style="top:241.01px;font-size:16.8px;color:#000;font-family:'Liberation Sans',sans-serif;letter-spacing:0.198px;left:220.5px;">Oiler_2</span>
<span id="t94" class="t" style="top:242.01px;font-size:14.4px;color:#000;font-family:'Liberation Sans',sans-serif;letter-spacing:0.064px;left:371px;">13674 MB/50 GB</span>
<div class="r" style="left:506px;top:241px;width:55px;height:16px;background:#00B050;"></div>
<span id="t95" class="t" style="top:266.01px;font-size:16.8px;color:#000;font-family:'Liberation Sans',sans-serif;left:-148.00px;width:400px;text-align:center;">11</span>
<span id="t96" class="t" style="top:266.01px;font-size:16.8px;color:#000;font-family:'Liberation Sans',sans-serif;letter-spacing:0.675px;left:78px;">Nhut</span>
<span id="t97" class="t" style="top:266.01px;font-size:16.8px;color:#000;font-family:'Liberation Sans',sans-serif;letter-spacing:0.095px;left:220.5px;">3rd_Engineer</span>
<span id="t98" class="t" style="top:267.01px;font-size:14.4px;color:#000;font-family:'Liberation Sans',sans-serif;letter-spacing:0.059px;left:371px;">4101 MB/50 GB</span>
<div class="r" style="left:506px;top:266px;width:17px;height:16px;background:#00B050;"></div>
<span id="t99" class="t" style="top:291.01px;font-size:16.8px;color:#000;font-family:'Liberation Sans',sans-serif;left:-148.00px;width:400px;text-align:center;">12</span>
<span id="t100" class="t" style="top:291.01px;font-size:16.8px;color:#000;font-family:'Liberation Sans',sans-serif;letter-spacing:-0.174px;left:78px;">Hai</span>
<span id="t101" class="t" style="top:291.01px;font-size:16.8px;color:#000;font-family:'Liberation Sans',sans-serif;letter-spacing:0.007px;left:220.5px;">Captain</span>
<span id="t102" class="t" style="top:292.01px;font-size:14.4px;color:#000;font-family:'Liberation Sans',sans-serif;letter-spacing:0.064px;left:371px;">10133 MB/50 GB</span>
<div class="r" style="left:506px;top:291px;width:41px;height:16px;background:#00B050;"></div>
<span id="t103" class="t" style="top:316.01px;font-size:16.8px;color:#000;font-family:'Liberation Sans',sans-serif;left:-148.00px;width:400px;text-align:center;">13</span>
<span id="t104" class="t" style="top:316.01px;font-size:16.8px;color:#000;font-family:'Liberation Sans',sans-serif;letter-spacing:0.197px;left:78px;">Quynh</span>
<span id="t105" class="t" style="top:316.01px;font-size:16.8px;color:#000;font-family:'Liberation Sans',sans-serif;letter-spacing:0.017px;left:220.5px;">1st_Engineer</span>
<span id="t106" class="t" style="top:317.01px;font-size:14.4px;color:#000;font-family:'Liberation Sans',sans-serif;letter-spacing:0.059px;left:371px;">2618 MB/50 GB</span>
<div class="r" style="left:506px;top:316px;width:11px;height:16px;background:#00B050;"></div>
<span id="t107" class="t" style="top:341.01px;font-size:16.8px;color:#000;font-family:'Liberation Sans',sans-serif;left:-148.00px;width:400px;text-align:center;">14</span>
<span id="t108" class="t" style="top:341.01px;font-size:16.8px;color:#000;font-family:'Liberation Sans',sans-serif;letter-spacing:0.104px;left:78px;">Binh</span>
<span id="t109" class="t" style="top:341.01px;font-size:16.8px;color:#000;font-family:'Liberation Sans',sans-serif;letter-spacing:0.056px;left:220.5px;">2nd_Engineer</span>
<span id="t110" class="t" style="top:342.01px;font-size:14.4px;color:#000;font-family:'Liberation Sans',sans-serif;letter-spacing:0.064px;left:371px;">20264 MB/50 GB</span>
<div class="r" style="left:506px;top:341px;width:82px;height:16px;background:#00B050;"></div>
<span id="t111" class="t" style="top:366.01px;font-size:16.8px;color:#000;font-family:'Liberation Sans',sans-serif;left:-148.00px;width:400px;text-align:center;">15</span>
<span id="t112" class="t" style="top:366.01px;font-size:16.8px;color:#000;font-family:'Liberation Sans',sans-serif;letter-spacing:-0.056px;left:78px;">Hung</span>
<span id="t113" class="t" style="top:366.01px;font-size:16.8px;color:#000;font-family:'Liberation Sans',sans-serif;letter-spacing:-0.457px;left:220.5px;">CEL_Assistant</span>
<span id="t114" class="t" style="top:367.01px;font-size:14.4px;color:#000;font-family:'Liberation Sans',sans-serif;letter-spacing:0.059px;left:371px;">7633 MB/50 GB</span>
<div class="r" style="left:506px;top:366px;width:31px;height:16px;background:#00B050;"></div>
<span id="t115" class="t" style="top:391.01px;font-size:16.8px;color:#000;font-family:'Liberation Sans',sans-serif;left:-148.00px;width:400px;text-align:center;">16</span>
<span id="t116" class="t" style="top:391.01px;font-size:16.8px;color:#000;font-family:'Liberation Sans',sans-serif;letter-spacing:-0.043px;left:78px;">Liem</span>
<span id="t117" class="t" style="top:391.01px;font-size:16.8px;color:#000;font-family:'Liberation Sans',sans-serif;transform:scaleX(0.8212);transform-origin:0 50%;left:220.5px;">CEL</span>
<span id="t118" class="t" style="top:392.01px;font-size:14.4px;color:#000;font-family:'Liberation Sans',sans-serif;letter-spacing:0.064px;left:371px;">12618 MB/50 GB</span>
<div class="r" style="left:506px;top:391px;width:51px;height:16px;background:#00B050;"></div>
<span id="t119" class="t" style="top:416.01px;font-size:16.8px;color:#000;font-family:'Liberation Sans',sans-serif;left:-148.00px;width:400px;text-align:center;">17</span>
<span id="t120" class="t" style="top:416.01px;font-size:16.8px;color:#000;font-family:'Liberation Sans',sans-serif;letter-spacing:-0.174px;left:78px;">Hai</span>
<span id="t121" class="t" style="top:416.01px;font-size:16.8px;color:#000;font-family:'Liberation Sans',sans-serif;letter-spacing:0.379px;left:220.5px;">3rd_Officer</span>
<span id="t122" class="t" style="top:417.01px;font-size:14.4px;color:#000;font-family:'Liberation Sans',sans-serif;letter-spacing:0.142px;left:371px;">31811 MB/50 GB</span>
<div class="r" style="left:506px;top:416px;width:128px;height:16px;background:#00B050;"></div>
<span id="t123" class="t" style="top:441.01px;font-size:16.8px;color:#000;font-family:'Liberation Sans',sans-serif;left:-148.00px;width:400px;text-align:center;">18</span>
<span id="t124" class="t" style="top:441.01px;font-size:16.8px;color:#000;font-family:'Liberation Sans',sans-serif;letter-spacing:-0.164px;left:78px;">Phong</span>
<span id="t125" class="t" style="top:441.01px;font-size:16.8px;color:#000;font-family:'Liberation Sans',sans-serif;letter-spacing:0.338px;left:220.5px;">2nd_Officer</span>
<span id="t126" class="t" style="top:442.01px;font-size:14.4px;color:#000;font-family:'Liberation Sans',sans-serif;letter-spacing:0.059px;left:371px;">9487 MB/50 GB</span>
<div class="r" style="left:506px;top:441px;width:38px;height:16px;background:#00B050;"></div>
<span id="t127" class="t" style="top:466.01px;font-size:16.8px;color:#000;font-family:'Liberation Sans',sans-serif;left:-148.00px;width:400px;text-align:center;">19</span>
<span id="t128" class="t" style="top:466.01px;font-size:16.8px;color:#000;font-family:'Liberation Sans',sans-serif;letter-spacing:-0.289px;left:78px;">Khoa</span>
<span id="t129" class="t" style="top:466.01px;font-size:16.8px;color:#000;font-family:'Liberation Sans',sans-serif;letter-spacing:0.186px;left:220.5px;">Chief_Officer</span>
<span id="t130" class="t" style="top:467.01px;font-size:14.4px;color:#000;font-family:'Liberation Sans',sans-serif;letter-spacing:0.064px;left:371px;">19144 MB/50 GB</span>
<div class="r" style="left:506px;top:466px;width:77px;height:16px;background:#00B050;"></div>
<span id="t131" class="t" style="top:491.01px;font-size:16.8px;color:#000;font-family:'Liberation Sans',sans-serif;left:-148.00px;width:400px;text-align:center;">20</span>
<span id="t132" class="t" style="top:491.01px;font-size:16.8px;color:#000;font-family:'Liberation Sans',sans-serif;letter-spacing:0.067px;left:78px;">Diep</span>
<span id="t133" class="t" style="top:491.01px;font-size:16.8px;color:#000;font-family:'Liberation Sans',sans-serif;letter-spacing:-0.159px;left:220.5px;">Salor_4</span>
<span id="t134" class="t" style="top:492.01px;font-size:14.4px;color:#000;font-family:'Liberation Sans',sans-serif;letter-spacing:0.064px;left:371px;">20122 MB/50 GB</span>
<div class="r" style="left:506px;top:491px;width:81px;height:16px;background:#00B050;"></div>
<div class="r" style="left:217px;top:535px;width:1px;height:24px;background:#fff;"></div>
<div class="r" style="left:217px;top:660px;width:1px;height:24px;background:#fff;"></div>
<span id="t135" class="t" style="top:541.01px;font-size:16.8px;color:#000;font-family:'Liberation Sans',sans-serif;font-weight:700;letter-spacing:-0.088px;left:77.5px;">Total traffic used (GB)</span>
<span id="t136" class="t" style="top:566.01px;font-size:16.8px;color:#000;font-family:'Liberation Sans',sans-serif;letter-spacing:0.269px;left:77.5px;">Update at:</span>
<span id="t137" class="t" style="top:591.01px;font-size:16.8px;color:#000;font-family:'Liberation Sans',sans-serif;letter-spacing:0.540px;left:77.5px;">12-06-2024 6:40</span>
<span id="t138" class="t" style="top:666.01px;font-size:16.8px;color:#000;font-family:'Liberation Sans',sans-serif;font-weight:700;letter-spacing:-0.254px;left:77.5px;">Elcome Report (GB)</span>
<span id="t139" class="t" style="top:566.01px;font-size:16.8px;color:#000;font-family:'Liberation Sans',sans-serif;letter-spacing:0.401px;right:1000.60px;">0-40</span>
<span id="t140" class="t" style="top:591.01px;font-size:16.8px;color:#000;font-family:'Liberation Sans',sans-serif;letter-spacing:0.461px;right:1000.54px;">40-45</span>
<span id="t141" class="t" style="top:616.01px;font-size:16.8px;color:#000;font-family:'Liberation Sans',sans-serif;letter-spacing:0.461px;right:1000.54px;">45-50</span>
<div class="r" style="left:368px;top:559px;width:136px;height:25px;background:#00B050;"></div>
<div class="r" style="left:368px;top:584px;width:136px;height:25px;background:#FFFF00;"></div>
<div class="r" style="left:368px;top:609px;width:136px;height:26px;background:#FF0000;"></div>
<span id="t142" class="t" style="top:541.01px;font-size:16.8px;color:#000;font-family:'Liberation Sans',sans-serif;font-weight:700;letter-spacing:0.589px;right:865.41px;">257.904</span>
<span id="t143" class="t" style="top:666.01px;font-size:16.8px;color:#000;font-family:'Liberation Sans',sans-serif;font-weight:700;letter-spacing:0.918px;right:865.08px;">414</span>
<div class="r" style="left:503px;top:659px;width:206px;height:26px;border:1px solid #000;box-sizing:border-box;"></div>
<div class="r" style="left:506px;top:666px;width:83px;height:16px;background:#00B050;"></div>
<span id="t144" class="t" style="top:689.00px;font-size:18.4px;color:#00B050;font-family:'Liberation Serif',serif;font-weight:700;letter-spacing:0.426px;left:406.71px;width:400px;text-align:center;">41.4%</span>
<div class="r" style="left:502px;top:608px;width:208px;height:27px;background:#fff;border:2px solid #217346;box-sizing:border-box;"></div>
<div class="r" style="left:705px;top:631px;width:7px;height:7px;background:#fff;"></div>
<div class="r" style="left:706px;top:632px;width:5px;height:5px;background:#217346;"></div>
<svg class="r" style="left:400px;top:515px" width="140" height="75" viewBox="0 0 140 75"><ellipse cx="69" cy="36" rx="60" ry="28.8" fill="none" stroke="#ED1C24" stroke-width="4"/></svg>
<svg class="r" style="left:425px;top:640px" width="115" height="75" viewBox="0 0 115 75"><ellipse cx="56.5" cy="36.5" rx="46.4" ry="29.5" fill="none" stroke="#ED1C24" stroke-width="4.1" transform="rotate(-4 56.5 36.5)"/></svg>
<div class="r" style="left:1345px;top:190px;width:21px;height:528px;background:#fff;"></div>
<div class="r" style="left:1348px;top:207px;width:15px;height:496px;background:#F3F3F3;"></div>
<div class="r" style="left:1348px;top:191px;width:15px;height:15px;background:#fff;border:1px solid #ABABAB;box-sizing:border-box;"></div>
<svg class="r" style="left:1352px;top:196px" width="7" height="4" viewBox="0 0 7 4"><path d="M0 4H7L3.5 0Z" fill="#777"/></svg>
<div class="r" style="left:1348px;top:372px;width:15px;height:331px;background:#fff;border:1px solid #ABABAB;box-sizing:border-box;"></div>
<div class="r" style="left:1348px;top:703px;width:15px;height:15px;background:#fff;border:1px solid #ABABAB;box-sizing:border-box;"></div>
<svg class="r" style="left:1352px;top:709px" width="7" height="4" viewBox="0 0 7 4"><path d="M0 0H7L3.5 4Z" fill="#777"/></svg>
<div class="r" style="left:0px;top:718px;width:1366px;height:27px;background:#F5F5F5;"></div>
<div class="r" style="left:1345px;top:718px;width:21px;height:1px;background:#F5F5F5;"></div>
<svg class="r" style="left:27px;top:727px" width="5" height="8" viewBox="0 0 5 8"><path d="M4.6 0V8L0 4Z" fill="#C8C8C8"/></svg>
<svg class="r" style="left:55px;top:727px" width="5" height="8" viewBox="0 0 5 8"><path d="M0.4 0V8L5 4Z" fill="#217346"/></svg>
<div class="r" style="left:100px;top:717px;width:68px;height:24px;background:#fff;border-left:1px solid #ABABAB;border-right:1px solid #ABABAB;box-sizing:border-box;"></div>
<div class="r" style="left:100px;top:740px;width:68px;height:2px;background:#217346;"></div>
<span id="t145" class="t" style="top:725.01px;font-size:12.5px;color:#217346;font-family:'Liberation Sans',sans-serif;font-weight:700;letter-spacing:-0.106px;left:112.5px;">12June</span>
<span id="t146" class="t" style="top:725.01px;font-size:12.5px;color:#444;font-family:'Liberation Sans',sans-serif;letter-spacing:-0.106px;left:180px;">11June</span>
<span id="t147" class="t" style="top:725.01px;font-size:12.5px;color:#444;font-family:'Liberation Sans',sans-serif;letter-spacing:-0.311px;left:247px;">10June</span>
<span id="t148" class="t" style="top:725.01px;font-size:12.5px;color:#444;font-family:'Liberation Sans',sans-serif;letter-spacing:-0.276px;left:317.5px;">09June</span>
<span id="t149" class="t" style="top:725.01px;font-size:12.5px;color:#444;font-family:'Liberation Sans',sans-serif;letter-spacing:-0.185px;left:388px;">08June</span>
<span id="t150" class="t" style="top:725.01px;font-size:12.5px;color:#444;font-family:'Liberation Sans',sans-serif;letter-spacing:-0.185px;left:455px;">07June</span>
<span id="t151" class="t" style="top:725.01px;font-size:12.5px;color:#444;font-family:'Liberation Sans',sans-serif;letter-spacing:-0.185px;left:522.5px;">06June</span>
<span id="t152" class="t" style="top:725.01px;font-size:12.5px;color:#444;font-family:'Liberation Sans',sans-serif;letter-spacing:-0.221px;left:589.5px;">05June</span>
<span id="t153" class="t" style="top:725.01px;font-size:12.5px;color:#444;font-family:'Liberation Sans',sans-serif;letter-spacing:-0.185px;left:656.3px;">04June</span>
<span id="t154" class="t" style="top:725.01px;font-size:12.5px;color:#444;font-family:'Liberation Sans',sans-serif;letter-spacing:-0.232px;left:723px;">03Ju</span>
<div class="r" style="left:234px;top:722px;width:1px;height:18px;background:#ABABAB;"></div>
<div class="r" style="left:305px;top:722px;width:1px;height:18px;background:#ABABAB;"></div>
<div class="r" style="left:376px;top:722px;width:1px;height:18px;background:#ABABAB;"></div>
<div class="r" style="left:443px;top:722px;width:1px;height:18px;background:#ABABAB;"></div>
<div class="r" style="left:510px;top:722px;width:1px;height:18px;background:#ABABAB;"></div>
<div class="r" style="left:577px;top:722px;width:1px;height:18px;background:#ABABAB;"></div>
<div class="r" style="left:644px;top:722px;width:1px;height:18px;background:#ABABAB;"></div>
<div class="r" style="left:711px;top:722px;width:1px;height:18px;background:#ABABAB;"></div>
<div class="r" style="left:758.5px;top:733px;width:2px;height:2px;background:#217346;"></div>
<div class="r" style="left:762.5px;top:733px;width:2px;height:2px;background:#217346;"></div>
<div class="r" style="left:766.5px;top:733px;width:2px;height:2px;background:#217346;"></div>
<svg class="r" style="left:782px;top:723px" width="17" height="17" viewBox="0 0 17 17"><circle cx="8.5" cy="8.5" r="7.4" fill="#fff" stroke="#777" stroke-width="1.2"/><path d="M4.5 8.5H12.5M8.5 4.5V12.5" stroke="#666" stroke-width="1.5"/></svg>
<div class="r" style="left:819px;top:726px;width:2px;height:2px;background:#ABABAB;"></div>
<div class="r" style="left:819px;top:730px;width:2px;height:2px;background:#ABABAB;"></div>
<div class="r" style="left:819px;top:734px;width:2px;height:2px;background:#ABABAB;"></div>
<div class="r" style="left:836px;top:724px;width:509px;height:15px;background:#E9E9E9;"></div>
<div class="r" style="left:836px;top:724px;width:15px;height:15px;background:#fff;border:1px solid #ABABAB;box-sizing:border-box;"></div>
<svg class="r" style="left:841px;top:728px" width="5" height="7" viewBox="0 0 5 7"><path d="M4.6 0V7L0 3.5Z" fill="#666"/></svg>
<div class="r" style="left:851px;top:724px;width:439px;height:15px;background:#fff;border:1px solid #ABABAB;box-sizing:border-box;"></div>
<div class="r" style="left:1330px;top:724px;width:15px;height:15px;background:#fff;border:1px solid #ABABAB;box-sizing:border-box;"></div>
<svg class="r" style="left:1336px;top:728px" width="5" height="7" viewBox="0 0 5 7"><path d="M0.4 0V7L5 3.5Z" fill="#666"/></svg>
<div class="r" style="left:0px;top:745px;width:1366px;height:21px;background:#217346;"></div>
<span id="t155" class="t" style="top:751.00px;font-size:11px;color:#fff;font-family:'Liberation Sans',sans-serif;transform:scaleX(0.8574);transform-origin:0 50%;left:7.5px;">READY</span>
<div class="r" style="left:1074px;top:745px;width:38px;height:21px;background:#0E6537;"></div>
<svg class="r" style="left:1085px;top:748px" width="15" height="15" viewBox="0 0 15 15"><path d="M1.5 1.5H13.5V13.5H1.5Z M5.5 1.5V13.5M9.5 1.5V13.5M1.5 5.5H13.5M1.5 9.5H13.5" fill="none" stroke="#fff" stroke-width="1.3"/></svg>
<svg class="r" style="left:1123px;top:748px" width="16" height="15" viewBox="0 0 16 15"><path d="M1.5 1.5H14.5V13.5H1.5Z" fill="none" stroke="#fff" stroke-width="1.3"/><path d="M4.5 3.8H11.5V11.2H4.5Z" fill="none" stroke="#fff" stroke-width="1.1"/><path d="M6 5.8H10M6 7.5H10M6 9.2H10" stroke="#fff" stroke-width="0.9"/></svg>
<svg class="r" style="left:1161px;top:748px" width="16" height="15" viewBox="0 0 16 15"><path d="M1.5 1.5H14.5V13.5H1.5Z" fill="none" stroke="#fff" stroke-width="1.3"/><path d="M2 2H9V8.5H2Z" fill="#fff" opacity="0.9"/><path d="M5.5 2V8" stroke="#217346" stroke-width="0.8"/><path d="M9 2V8.5H2" fill="none" stroke="#fff" stroke-width="1.3"/></svg>
<div class="r" style="left:1193px;top:754px;width:6px;height:2px;background:#fff;"></div>
<div class="r" style="left:1203px;top:755px;width:100px;height:1px;background:#fff;"></div>
<div class="r" style="left:1251px;top:750px;width:4px;height:11px;background:#fff;"></div>
<div class="r" style="left:1307px;top:754.5px;width:8px;height:2px;background:#fff;"></div>
<div class="r" style="left:1310px;top:751.5px;width:2px;height:8px;background:#fff;"></div>
<span id="t156" class="t" style="top:751.00px;font-size:11px;color:#fff;font-family:'Liberation Sans',sans-serif;letter-spacing:-0.182px;left:1330.5px;">100%</span>
<div class="r" style="left:0px;top:766px;width:1366px;height:1px;background:#1F2A33;"></div>
<div class="r" style="left:0px;top:767px;width:1366px;height:1px;background:#8C9AA2;"></div>
<div class="r" style="left:324px;top:767px;width:58px;height:1px;background:#F4F4F4;"></div>
<div class="r" style="left:510px;top:767px;width:58px;height:1px;background:#F4F4F4;"></div>
<div class="r" style="left:572px;top:767px;width:58px;height:1px;background:#F4F4F4;"></div>
</body></html>
